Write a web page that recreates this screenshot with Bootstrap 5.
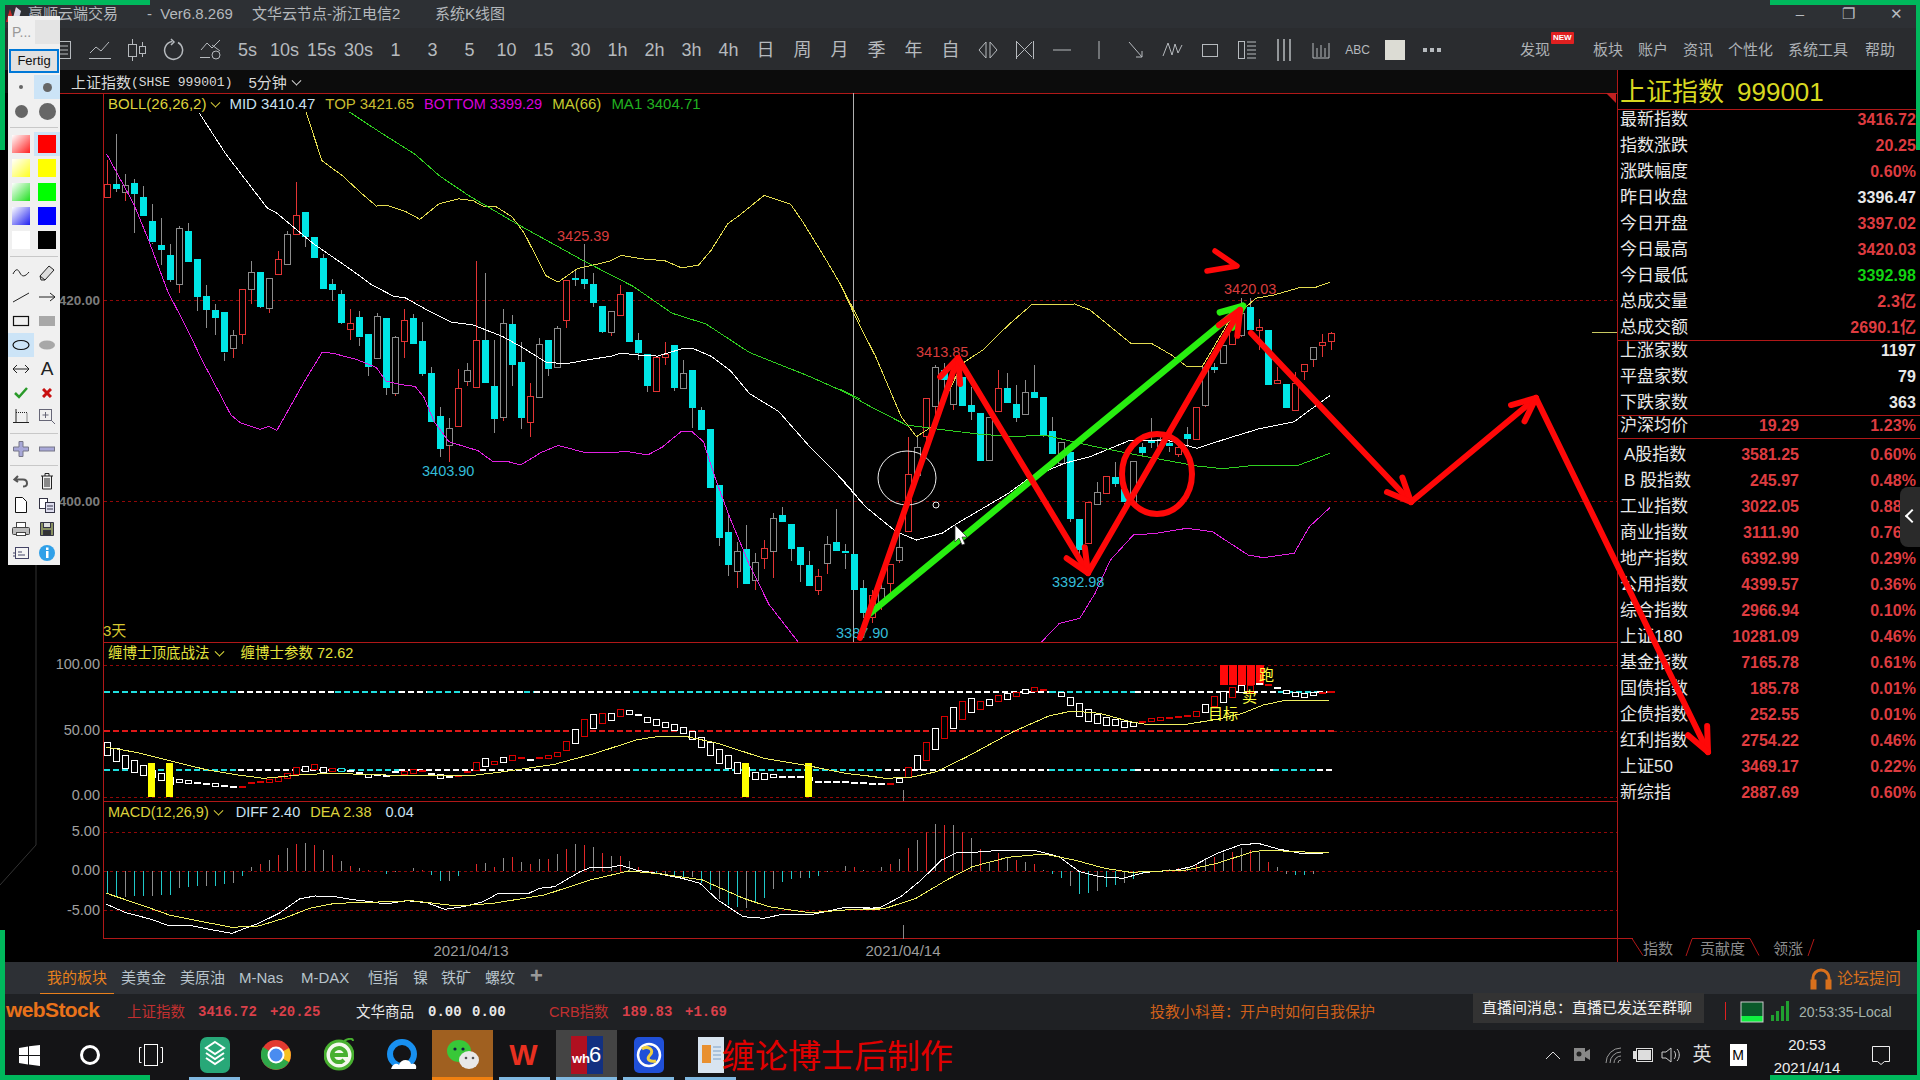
<!doctype html>
<html lang="zh">
<head>
<meta charset="utf-8">
<title>系统K线图</title>
<link href="https://cdn.jsdelivr.net/npm/bootstrap@5.3.0/dist/css/bootstrap.min.css" rel="stylesheet">
<style>
html,body{margin:0;background:#000;overflow:hidden}
body,svg text{font-family:"Liberation Sans","Noto Sans CJK SC",sans-serif}
.appbox{width:1920px;height:1080px;color:#ddd;overflow:hidden}
.ttlbar{height:28px;background:#2d3034;color:#b4b8bc;font-size:15px;padding-left:28px;flex:none;position:relative}
.ttlbar span{white-space:nowrap}
.ttlicon{position:absolute;left:5px;top:6px}
.ttl-a{width:119px}.ttl-b{width:105px}.ttl-c{width:183px}
.winbtn{width:48px;text-align:center;color:#b8bcc0;font-size:15px}
.tlbar{height:42px;background:#2a2c2f;padding-left:44px;padding-top:2px;flex:none}
.tlcell{width:37px;height:40px;color:#b6babe;font-size:18px;display:flex;align-items:center;justify-content:center;white-space:nowrap}
.tlcell svg{display:block}
.tlcell.sm{font-size:12px}
.tlmenu{font-size:15px;color:#aeb2b6;position:relative;white-space:nowrap}
.newtag{position:absolute;left:31px;top:-7px;background:#e02020;color:#fff;font-size:8px;font-weight:700;line-height:12px;padding:0 2px;border-radius:1px}
.mainrow{height:892px;flex:none;background:#000}
.chartcol{width:1617px;flex:none}
.subhdr{height:23px;background:#0c0c0c;padding:3px 0 0 71px;font-size:15px;color:#d8d8d8;white-space:nowrap;flex:none}
.subhdr .mono{font-family:"Liberation Mono","Noto Sans CJK SC",monospace;font-size:13px}
.panea{height:549px}.paneb{height:159px}.panec{height:138px}
.canvas{left:0;top:0;overflow:visible}
.legendrow{padding-left:108px;font-size:15px;line-height:22px;white-space:nowrap;gap:10px}
.legendrow.lc{font-size:14.5px;gap:10px}
.bott{font-size:14.5px}
.chev{display:inline-block;width:7px;height:7px;border-right:1px solid currentColor;border-bottom:1px solid currentColor;transform:rotate(45deg) translate(-2px,-2px);margin-left:6px}
.c-ye{color:#dcd23c}.c-bl{color:#c8e0f0}.c-to{color:#c8bc30}.c-mg{color:#d800d8}.c-ma{color:#c4cc30}.c-gr{color:#20b020}.c-yy{color:#e4e43c}
.dateaxis{height:23px;color:#9c9c9c;font-size:15px}
.dateaxis span{position:absolute;top:1px;transform:translateX(-50%)}
.dt-a{left:471px}.dt-b{left:903px}
.sidepan{width:303px;flex:none;border-left:1px solid #b01818;padding-right:4px;position:relative}
.sidettl{height:40px;border-bottom:1px solid #b01818;margin-right:-4px;padding-left:2px;color:#d8d820;font-size:26px;line-height:44px;white-space:nowrap}
.sidettl span{margin-left:13px}
.sect{border-bottom:1px solid #b01818;margin-right:-4px;padding-right:4px}
.sect.nob{border:0;padding-top:3px}
.sect.up{margin-top:-4px}
.pvrow{height:26px;display:flex;align-items:center;font-size:17px;line-height:24px;color:#e8e8e8;padding:2px 0 0 2px;white-space:nowrap}
.sect.nob .pvrow{padding-top:0}
.pv-l{width:72px}
.pv-l.ind{padding-left:4px}
.pv-m{width:107px;text-align:right;font-size:16px;font-weight:700;color:#de3c40}
.pv-r{flex:1;text-align:right;font-size:16px;font-weight:700;color:#de3c40;letter-spacing:.1px}
.pv-r.wt{color:#e8e8e8}.pv-r.gn{color:#12d412}
.tabsvg{left:0;bottom:0}
.tabrow{height:32px;background:#2d3035;color:#b8c4cc;font-size:15px;flex:none}
.tabrow .nav-link{color:#b8c4cc;padding:0;position:absolute;top:5px;line-height:22px;white-space:nowrap}
.tabrow .nav-link.active{color:#e8801c}
.tabline{position:absolute;left:40px;width:74px;bottom:0;height:1px;background:#e8801c}
.forum{position:absolute;left:1810px;top:5px;color:#d8701c;font-size:16px;white-space:nowrap;display:flex;align-items:center;gap:5px}
.stockbar{height:36px;background:#1f2124;flex:none;font-size:14.5px;white-space:nowrap}
.stockbar>*{position:absolute;top:8px;line-height:20px}
.logoa{color:#e8721a;font-weight:700;font-size:21px;left:6px;letter-spacing:-.6px;top:6px!important}
.st-r{color:#c23030}.st-rb{color:#d8404a;font-family:"Liberation Mono",monospace;font-size:14px;font-weight:700}
.st-w{color:#e8e8e8}.st-wb{color:#e8e8e8;font-family:"Liberation Mono",monospace;font-size:14px;font-weight:700}
.st-or{color:#d0601a;font-size:15px}
.toast-live{left:1473px;top:-1px!important;width:231px;height:30px;background:#333;color:#f0f0f0;font-size:15px;line-height:30px!important;padding-left:9px;z-index:2}
.clockt{color:#a4b4ac;font-size:14px;left:1799px}
.taskbar{height:50px;background:#141416;flex:none}
.tkic{position:absolute;top:0;width:61px;height:50px;display:flex;align-items:center;justify-content:center}
.tkic.act-a{background:#a06020}.tkic.act-b{background:#444}
.tkmark{position:absolute;top:47px;height:3px;background:#80b8e0}
.tkmark.or{background:#f08010}
.redcap{position:absolute;left:722px;top:5px;font-size:33px;line-height:44px;color:#e00000;white-space:nowrap;font-family:"Liberation Serif","Noto Sans CJK SC",serif}
.tray{position:absolute;top:0;height:50px;display:flex;align-items:center;justify-content:center;color:#ddd}
.tclock{position:absolute;left:1765px;width:84px;text-align:center;color:#eee;font-size:15px;line-height:23px;top:3px}
.mbox{width:17px;height:22px;border:1px solid #fff;font-size:14px;line-height:20px;text-align:center;background:#fff;color:#000}
.overlay{left:0;top:0;pointer-events:none}
.toolpan{left:8px;top:16px;width:52px;background:#f0f0f0;color:#222}
.tp-hd{height:33px;font-size:14px;color:#999;line-height:32px;padding-left:4px;position:relative}
.tp-hd i{position:absolute;left:27px;top:4px;width:25px;height:24px;background:#e4e4e4}
.tp-btn{height:24px;margin:0 1px;border:2px solid #0078d7;background:#e1e1e1;font-size:13px;line-height:20px;text-align:center;color:#111}
.tp-grid{display:grid;grid-template-columns:26px 26px;grid-auto-rows:24px;padding-top:2px}
.tp-grid.c{padding-top:0}
.tp-cell{display:flex;align-items:center;justify-content:center}
.tp-cell.sel{background:#cce4f7}
.tp-sep{height:9px;display:flex;align-items:center}
.tp-sep.nr{height:8px}
.tp-sep::after{content:"";height:1px;background:#c8c8c8;flex:1;margin:0 2px}
.dotg{border-radius:50%;background:#666;display:block}
.dot3{width:4px;height:4px}.dot8{width:9px;height:9px}.dot13{width:13px;height:13px}.dot16{width:17px;height:17px}
.swa{display:block;width:18px;height:18px}
.sw1{background:linear-gradient(135deg,#fff,#ff2020)}.sw2{background:#f00}
.sw3{background:linear-gradient(135deg,#fff,#ffff20)}.sw4{background:#ff0}
.sw5{background:linear-gradient(135deg,#fff,#20e020)}.sw6{background:#0f0}
.sw7{background:linear-gradient(135deg,#fff,#2020f0)}.sw8{background:#00f}
.sw9{background:#fff}.sw10{background:#000}
.tp-a{font-size:19px;line-height:24px}
.sideflap{right:0;top:487px;width:20px;height:60px;background:#2a2a2a;border-radius:8px 0 0 8px}
.sideflap::after{content:"";position:absolute;left:7px;top:24px;width:10px;height:10px;border-left:2px solid #fff;border-bottom:2px solid #fff;transform:rotate(45deg)}
.brk{position:absolute;background:#00b85c}
.b1{left:0;top:0;width:150px;height:5px}.b2{left:0;top:0;width:5px;height:150px}
.b3{right:0;top:0;width:150px;height:5px}.b4{right:0;top:0;width:4px;height:150px}
.b5{left:0;bottom:0;width:150px;height:5px}.b6{left:0;bottom:0;width:5px;height:150px}
.b7{right:0;bottom:0;width:150px;height:5px}.b8{right:0;bottom:0;width:3px;height:150px}
</style>
</head>
<body>
<div class="appbox d-flex flex-column position-relative">

  <div class="ttlbar d-flex align-items-center">
    <svg class="ttlicon" width="18" height="16"><path d="M1 16L5 3l3 9 3-11 2 15z" fill="#c82828"/><path d="M8 12l3-11 5 4-3 11z" fill="#d8d8e8"/></svg>
    <span class="ttl-a">赢顺云端交易</span><span class="ttl-b">-&nbsp;&nbsp;Ver6.8.269</span><span class="ttl-c">文华云节点-浙江电信2</span><span>系统K线图</span>
    <div class="ms-auto d-flex align-items-center">
      <span class="winbtn">–</span><span class="winbtn">❐</span><span class="winbtn">✕</span>
    </div>
  </div>

  <div class="tlbar d-flex align-items-center">
    <div class="tlcell"><svg width="20" height="22" fill="none" stroke="#b6babe"><rect x="2.5" y="2.5" width="15" height="17"/><path d="M6 7h9M6 11h9M6 15h9"/></svg></div>
    <div class="tlcell"><svg width="24" height="22" fill="none" stroke="#b6babe"><path d="M2 14l6-6 5 4 8-9M1 19.500h22"/></svg></div>
    <div class="tlcell"><svg width="24" height="24" fill="none" stroke="#b6babe"><path d="M7.500 1v22M17.500 4v15"/><rect x="3.500" y="6.500" width="8" height="12" fill="#2a2c2f"/><rect x="14.500" y="8.500" width="6" height="7" fill="#2a2c2f"/></svg></div>
    <div class="tlcell"><svg width="22" height="24" fill="none" stroke="#b6babe" stroke-width="1.500"><path d="M9 3.500A9 9 0 1 0 15 4.500M8 1l3 3-3 3"/></svg></div>
    <div class="tlcell"><svg width="24" height="24" fill="none" stroke="#b6babe"><path d="M2 12l6-7 5 5 8-8M1 19.500h10"/><circle cx="17" cy="17" r="4"/><path d="M13 7l8 6"/></svg></div>
    <div class="tlcell">5s</div><div class="tlcell">10s</div><div class="tlcell">15s</div><div class="tlcell">30s</div>
    <div class="tlcell">1</div><div class="tlcell">3</div><div class="tlcell">5</div><div class="tlcell">10</div><div class="tlcell">15</div><div class="tlcell">30</div>
    <div class="tlcell">1h</div><div class="tlcell">2h</div><div class="tlcell">3h</div><div class="tlcell">4h</div>
    <div class="tlcell">日</div><div class="tlcell">周</div><div class="tlcell">月</div><div class="tlcell">季</div><div class="tlcell">年</div><div class="tlcell">自</div>
    <div class="tlcell"><svg width="22" height="20" fill="none" stroke="#b6babe"><path d="M9 2L2 10l7 8zM13 2l7 8-7 8z"/></svg></div>
    <div class="tlcell"><svg width="22" height="22" fill="none" stroke="#b6babe"><path d="M2.500 2v18M19.500 2v18M3 3l15 15M18 3L3 18"/></svg></div>
    <div class="tlcell"><svg width="20" height="6" stroke="#b6babe"><path d="M1 3h18"/></svg></div>
    <div class="tlcell"><svg width="6" height="20" stroke="#b6babe"><path d="M3 1v18"/></svg></div>
    <div class="tlcell"><svg width="20" height="20" fill="none" stroke="#b6babe"><path d="M3 2l13 15M16 11v6h-6"/></svg></div>
    <div class="tlcell"><svg width="22" height="22" fill="none" stroke="#b6babe"><path d="M1 17L6 4l4 12 3-11 3 9 4-8"/></svg></div>
    <div class="tlcell"><svg width="20" height="20" fill="none" stroke="#b6babe"><rect x="2.500" y="4.500" width="15" height="12"/></svg></div>
    <div class="tlcell"><svg width="20" height="22" fill="none" stroke="#b6babe"><rect x="1.500" y="2.500" width="6" height="17"/><path d="M10 3h9M10 7h9M10 11h9M10 15h9M10 19h9"/></svg></div>
    <div class="tlcell"><svg width="18" height="24" stroke="#b6babe" stroke-width="1.500"><path d="M3 1v22M9 1v22M15 1v22"/></svg></div>
    <div class="tlcell"><svg width="20" height="20" fill="none" stroke="#b6babe"><path d="M2 3v15h16V3M6 8v9M10 5v12M14 8v9"/></svg></div>
    <div class="tlcell sm">ABC</div>
    <div class="tlcell"><svg width="20" height="20"><rect width="20" height="20" fill="#dcdcd4"/></svg></div>
    <div class="tlcell"><svg width="20" height="6" fill="#b6babe"><rect x="1" y="1" width="4" height="4"/><rect x="8" y="1" width="4" height="4"/><rect x="15" y="1" width="4" height="4"/></svg></div>
    <div class="tlmenu ms-auto d-flex" id="menuRight">
      <span class="position-relative">发现<span class="newtag">NEW</span></span>
    </div>
  </div>

  <div class="mainrow d-flex">
    <div class="chartcol d-flex flex-column">
      <div class="subhdr d-flex align-items-center">上证指数<span class="mono">(SHSE 999001)</span><span class="ms-3">5分钟</span><span class="chev"></span></div>
      <div class="panea position-relative">
        <svg id="svgA" class="position-absolute canvas" width="1617" height="549" viewBox="0 93 1617 549"></svg>
        <div class="legendrow d-flex position-relative">
          <span class="c-ye">BOLL(26,26,2)<span class="chev"></span></span>
          <span class="c-bl">MID 3410.47</span><span class="c-to">TOP 3421.65</span><span class="c-mg bott">BOTTOM 3399.29</span><span class="c-ma">MA(66)</span><span class="c-gr">MA1 3404.71</span>
        </div>
      </div>
      <div class="paneb position-relative">
        <svg id="svgB" class="position-absolute canvas" width="1617" height="159" viewBox="0 642 1617 159"></svg>
        <div class="legendrow lc d-flex position-relative c-yy">
          <span>缠博士顶底战法<span class="chev"></span></span><span class="ms-2">缠博士参数 72.62</span>
        </div>
      </div>
      <div class="panec position-relative">
        <svg id="svgC" class="position-absolute canvas" width="1617" height="138" viewBox="0 801 1617 138"></svg>
        <div class="legendrow lc d-flex position-relative">
          <span class="c-ye">MACD(12,26,9)<span class="chev"></span></span><span class="c-bl ms-1">DIFF 2.40</span><span class="c-ye">DEA 2.38</span><span class="c-bl ms-1">0.04</span>
        </div>
      </div>
      <div class="dateaxis position-relative"><span class="dt-a">2021/04/13</span><span class="dt-b">2021/04/14</span></div>
    </div>
    <div class="sidepan d-flex flex-column">
      <div class="sidettl">上证指数<span>999001</span></div>
      <div class="sect up" id="s1"></div>
      <div class="sect up" id="s2"></div>
      <div class="sect up" id="s3"></div>
      <div class="sect nob" id="s4"></div>
      <svg class="position-absolute tabsvg" width="302" height="24" fill="none" stroke="#b01818"><path d="M0 .500H14l11 17M68 18l6-17M74 .500h58M132 .500l9 17M190 18l6-17"/>
        <text x="25" y="16" font-size="15" fill="#8c8c8c" stroke="none">指数</text><text x="82" y="16" font-size="15" fill="#8c8c8c" stroke="none">贡献度</text><text x="155" y="16" font-size="15" fill="#8c8c8c" stroke="none">领涨</text></svg>
    </div>
  </div>

  <div class="tabrow position-relative">
    <ul class="nav">
      <li><a class="nav-link active tx-47">我的板块</a></li>
    </ul>
    <span class="tabline"></span>
    <div id="tabsHost"></div>
    <div class="forum"><svg width="22" height="22" fill="none" stroke="#d8701c" stroke-width="3"><path d="M3 15V10a8 8 0 0 1 16 0v5"/><rect x="2" y="13" width="3" height="7" fill="#d8701c"/><rect x="17" y="13" width="3" height="7" fill="#d8701c"/></svg>论坛提问</div>
  </div>

  <div class="stockbar position-relative" id="stockBar">
    <span class="logoa">webStock</span>
    <span class="toast-live">直播间消息：直播已发送至群聊</span>
  </div>

  <div class="taskbar position-relative" id="taskBar">
    <span class="redcap">缠论博士后制作</span>
    <span class="tclock">20:53<br>2021/4/14</span>
  </div>

  <svg class="position-absolute overlay" id="anno" width="1920" height="1080"></svg>

  <div class="position-absolute sideflap"></div>

  <div class="position-absolute toolpan" id="toolPan">
    <div class="tp-hd">P...<i></i></div>
    <div class="tp-btn">Fertig</div>
    <div class="tp-grid">
      <div class="tp-cell"><span class="dotg dot3"></span></div><div class="tp-cell sel"><span class="dotg dot8"></span></div>
      <div class="tp-cell"><span class="dotg dot13"></span></div><div class="tp-cell"><span class="dotg dot16"></span></div>
    </div>
    <div class="tp-sep"></div>
    <div class="tp-grid c">
      <div class="tp-cell"><span class="swa sw1"></span></div><div class="tp-cell sel"><span class="swa sw2"></span></div>
      <div class="tp-cell"><span class="swa sw3"></span></div><div class="tp-cell"><span class="swa sw4"></span></div>
      <div class="tp-cell"><span class="swa sw5"></span></div><div class="tp-cell"><span class="swa sw6"></span></div>
      <div class="tp-cell"><span class="swa sw7"></span></div><div class="tp-cell"><span class="swa sw8"></span></div>
      <div class="tp-cell"><span class="swa sw9"></span></div><div class="tp-cell"><span class="swa sw10"></span></div>
    </div>
    <div class="tp-sep"></div>
    <div class="tp-grid c">
      <div class="tp-cell"><svg width="18" height="12" fill="none" stroke="#222"><path d="M1 7c3-6 5-5 7-1s5 4 9-1"/></svg></div>
      <div class="tp-cell"><svg width="18" height="18" fill="none" stroke="#222"><path d="M2 12L11 2l5 4-9 10H3z" fill="#ddd"/><path d="M2 12l5 4"/></svg></div>
      <div class="tp-cell"><svg width="18" height="12" stroke="#222"><path d="M1 11L17 2"/></svg></div>
      <div class="tp-cell"><svg width="18" height="12" fill="none" stroke="#222"><path d="M1 6h16M12 2l5 4-5 4"/></svg></div>
      <div class="tp-cell"><svg width="18" height="12" fill="none" stroke="#111" stroke-width="1.200"><rect x="1.500" y="1.500" width="15" height="9"/></svg></div>
      <div class="tp-cell"><svg width="18" height="12"><rect x="1" y="1" width="16" height="10" fill="#a8a8a8"/></svg></div>
      <div class="tp-cell sel"><svg width="18" height="12" fill="none" stroke="#111" stroke-width="1.200"><ellipse cx="9" cy="6" rx="8" ry="4.500"/></svg></div>
      <div class="tp-cell"><svg width="18" height="12"><ellipse cx="9" cy="6" rx="8" ry="4.500" fill="#a8a8a8"/></svg></div>
      <div class="tp-cell"><svg width="18" height="12" fill="none" stroke="#222"><path d="M1 6h16M5 2L1 6l4 4M13 2l4 4-4 4"/></svg></div>
      <div class="tp-cell tp-a">A</div>
      <div class="tp-cell"><svg width="14" height="12" fill="none" stroke="#2a9a2a" stroke-width="2.500"><path d="M1 6l4 4 8-9"/></svg></div>
      <div class="tp-cell"><svg width="10" height="10" stroke="#c81010" stroke-width="3"><path d="M1 1l8 8M9 1L1 9"/></svg></div>
      <div class="tp-cell"><svg width="18" height="18" fill="none" stroke="#222"><path d="M4 1v14M1 14.500h16" /><path d="M4 4.500h11v10" stroke-dasharray="1 1"/></svg></div>
      <div class="tp-cell"><svg width="18" height="18" fill="none" stroke="#667"><rect x="1.500" y="1.500" width="12" height="11"/><path d="M7.500 4v6M4.500 7h6M13 12l4 4"/></svg></div>
    </div>
    <div class="tp-sep nr"></div>
    <div class="tp-grid c">
      <div class="tp-cell"><svg width="16" height="16" fill="#a8a8d8" stroke="#778"><path d="M6 .500h4v5.500h5.500v4H10v5.500H6V10H.500V6H6z"/></svg></div>
      <div class="tp-cell"><svg width="16" height="6" fill="#a8a8d8" stroke="#778"><rect x=".500" y="1" width="15" height="4"/></svg></div>
    </div>
    <div class="tp-sep nr"></div>
    <div class="tp-grid c">
      <div class="tp-cell"><svg width="16" height="14" fill="none" stroke="#555" stroke-width="2"><path d="M5 2L1.500 5.500 5 8M2 5.500h8c3 0 4 2 4 4s-2 3-4 3"/></svg></div>
      <div class="tp-cell"><svg width="14" height="18" fill="none" stroke="#222"><path d="M1 4h12M5 4V1.500h4V4M2.500 4v13h9V4M5 6v9M7 6v9M9 6v9"/></svg></div>
      <div class="tp-cell"><svg width="14" height="18" fill="#fff" stroke="#111"><path d="M1.500 1.500h7l4 4v11h-11z"/></svg></div>
      <div class="tp-cell"><svg width="18" height="16" fill="#fff" stroke="#334"><rect x="1.500" y="1.500" width="8" height="10"/><rect x="7.500" y="5.500" width="9" height="10" fill="#dde"/><path d="M9 9h6M9 12h6"/></svg></div>
      <div class="tp-cell"><svg width="20" height="16" fill="#bbb" stroke="#444"><rect x="1.500" y="6.500" width="17" height="7" rx="1"/><rect x="5.500" y="1.500" width="9" height="5" fill="#fff"/><rect x="5.500" y="11.500" width="9" height="3" fill="#fff"/></svg></div>
      <div class="tp-cell"><svg width="16" height="16" fill="#889060" stroke="#334"><path d="M1.500 1.500h13v13h-13z"/><rect x="4.500" y="1.500" width="7" height="5" fill="#ddd"/><rect x="4.500" y="9.500" width="7" height="5" fill="#333"/></svg></div>
      <div class="tp-cell"><svg width="18" height="14" fill="#f4f4f4" stroke="#446"><rect x="3.500" y="1.500" width="13" height="11"/><path d="M6 6h4M6 9h7M1 7h2M1 10h2"/></svg></div>
      <div class="tp-cell"><svg width="18" height="18"><circle cx="9" cy="9" r="8" fill="#30a0e8"/><rect x="8" y="7" width="2.500" height="7" fill="#fff"/><rect x="8" y="3.500" width="2.500" height="2.500" fill="#fff"/></svg></div>
    </div>
  </div>

  <i class="brk b1"></i><i class="brk b2"></i><i class="brk b3"></i><i class="brk b4"></i>
  <i class="brk b5"></i><i class="brk b6"></i><i class="brk b7"></i><i class="brk b8"></i>
</div>

<script>
const NS='http://www.w3.org/2000/svg';
function el(p,t,a,txt){const e=document.createElementNS(NS,t);for(const k in a)e.setAttribute(k,a[k]);if(txt!==undefined)e.textContent=txt;p.appendChild(e);return e;}
const cx=i=>Math.round(106.8+9*i);
const z10=(p)=>[100+p[0]/2.063,90+p[1]/2.8], z11=(p)=>[840+p[0]/1.96,230+p[1]/3], z7=(p)=>[80+p[0]/1.96,630+p[1]/3], z8=(p)=>[860+p[0]/1.96,630+p[1]/3];
const Y10=y=>90+y/2.8,Y11=y=>230+y/3,Yz=y=>630+y/3;
function crisp(y){return Math.round(y)+.5;}

const A=document.getElementById('svgA'),B=document.getElementById('svgB'),C=document.getElementById('svgC');
const GRID='#900808',RED='#b01818';
function hl(s,x1,x2,y,col,dash,w){const a={x1,x2,y1:y,y2:y,stroke:col,'stroke-width':w||1,'shape-rendering':'crispEdges'};if(dash)a['stroke-dasharray']=dash;el(s,'line',a);}
function vl(s,x,y1,y2,col,w){el(s,'line',{x1:x,x2:x,y1,y2,stroke:col,'stroke-width':w||1,'shape-rendering':'crispEdges'});}
function lab(s,x,y,t,col,size,anchor,bold){const a={x,y,fill:col,'font-size':size||15,'text-anchor':anchor||'start'};if(bold)a['font-weight']=700;el(s,'text',a,t);}
function poly(s,pts,col){el(s,'polyline',{points:pts.map(p=>p[0].toFixed(1)+','+p[1].toFixed(1)).join(' '),fill:'none',stroke:col,'shape-rendering':'crispEdges'});}

/* main pane */
hl(A,60,1617,93.5,RED);vl(A,103.5,93,642,RED);
hl(A,104,1617,300.5,GRID,'3 3');hl(A,104,1617,501.5,GRID,'3 3');
lab(A,100,305,'3420.00','#7c7c7c',13.5,'end',1);lab(A,100,506,'3400.00','#7c7c7c',13.5,'end',1);
vl(A,853.5,93,642,'#b0b0b0');
hl(A,1592,1617,332.5,'#c8c860');
el(A,'polygon',{points:'1606,93 1616,93 1616,103',fill:'#c02020'});
const CY='#00e6e6',RD='#e23434',GY='#8c8c8c';
const mainC=[
['r',196,262,298,298],['c',122,264,277,285],['w',235,267,287,310],['c',248,260,290,400],['c',270,300,352,352],['c',320,367,427,430],['c',358,434,447,490],['c',432,462,532,538],['w',380,387,544,568],['c',372,395,483,483],
['c',473,473,579,620],['c',545,577,615,665],['c',600,616,637,685],['c',622,622,735,758],['w',672,687,723,750],['r',558,558,685,710],['w',480,510,558,600],['c',510,510,608,610],['w',525,525,608,625],['r',450,473,515,515],
['w',395,403,486,486],['r',258,350,403,403],['c',342,342,412,440],['c',412,412,472,472],['c',460,470,556,556],['c',530,543,559,592],['c',560,572,652,655],['r',612,651,667,700],['c',618,636,693,718],['c',683,683,775,800],
['w',625,634,752,752],['c',638,638,833,853],['w',690,692,850,857],['r',612,645,705,750],['c',628,638,710,710],['c',650,703,795,800],['c',775,792,930,930],['c',888,913,1004,1027],['w',918,947,995,1042],['r',780,833,940,940],
['w',765,785,815,830],['r',480,701,833,833],['c',512,700,820,820],['c',700,829,920,960],['w',612,652,915,928],['c',630,655,770,830],['c',705,762,918,950],['r',820,858,930,972],['w',695,712,860,860],['c',700,700,780,800],
['w',660,667,777,777],['r',533,533,645,665],['c',505,526,532,550],['c',432,530,543,558],['c',512,543,596,607],['c',605,605,678,680],['w',620,620,680,688],['r',545,572,632,632],['c',566,566,705,705],['c',680,700,736,755],
['c',740,740,830,845],['r',745,747,842,842],['r',705,740,748,770],['c',714,714,834,842],['w',755,792,834,834],['c',783,783,888,945],['c',888,897,952,952],['c',949,949,1113,1113],['c',1106,1106,1253,1278],['c',1190,1238,1330,1362],
['w',1265,1292,1348,1395],['c',1218,1285,1382,1382],['w',1295,1322,1373,1400],['r',1260,1283,1312,1340],['w',1185,1197,1288,1365],['c',1168,1190,1210,1210],['c',1215,1215,1285,1320],['c',1280,1280,1330,1378],['c',1292,1330,1390,1390],['r',1340,1362,1402,1415],
['w',1250,1272,1325,1355],['c',1172,1266,1290,1290],['c',1270,1292,1298,1340],['c',1300,1300,1400,1400]];
const main2=[
['c',1050,1075,1150,1165],['r',1080,1095,1160,1180],['w',1060,1075,1120,1140],['r',1003,1003,1060,1090],['w',905,950,990,1000],['r',620,733,905,905],['w',615,652,735,735],['r',505,505,620,650],['w',405,412,530,560],['c',400,420,450,480],
['w',430,440,520,540],['c',440,440,527,527],['c',470,525,545,570],['c',548,548,692,692],['w',562,562,692,692],['r',420,475,545,545],['c',430,475,520,520],['c',465,522,563,575],['w',450,485,552,552],['c',405,487,505,505],
['c',502,502,615,620],['c',560,603,672,672],['w',637,637,700,702],['c',665,665,865,875],['c',868,868,960,1020],['r',817,817,940,940],['w',755,785,820,820],['r',737,737,788,790],['c',695,742,762,770],['c',700,778,818,830],
['w',692,692,820,830],['c',640,650,668,680],['c',565,633,640,655],['w',620,628,650,660],['c',630,640,650,665],['r',640,650,670,680],['c',590,613,628,650],['r',532,532,628,628],['w',410,410,525,530],['c',400,410,418,430],
['w',345,345,400,402],['r',280,290,340,340],['w',205,250,315,320],['c',205,232,302,302],['r',268,290,298,360],['c',300,300,466,466],['r',410,450,458,460],['c',462,462,533,533],['r',425,460,540,540],['r',403,403,425,450],
['w',350,350,385,410],['r',312,335,343,380],['r',305,308,333,360]];
function candle(i,c,Yf){
  const x=cx(i),col=c[0]==='c'?GY:(c[0]==='r'?RD:GY);
  const lowc=c[0]==='w'?RD:col;
  const t=Yf(c[1]),b1=Yf(c[2]),b2=Yf(c[3]),b=Yf(c[4]);
  vl(A,x+.5,t,b1,col);vl(A,x+.5,b2,b,lowc);
  if(c[0]==='c')el(A,'rect',{x:x-3,y:Math.round(b1),width:7,height:Math.max(2,Math.round(b2-b1)),fill:CY,'shape-rendering':'crispEdges'});
  else el(A,'rect',{x:x-2.5,y:crisp(b1),width:6,height:Math.max(2,Math.round(b2-b1)),fill:'#000',stroke:c[0]==='r'?RD:GY,'shape-rendering':'crispEdges'});
}
mainC.forEach((c,i)=>candle(i,c,Y10));
main2.forEach((c,i)=>candle(i+84,c,Y11));

const wh1=[[205,65],[260,180],[345,330],[365,345],[440,430],[520,505],[560,545],[605,577],[630,582],[680,620],[725,650],[770,658],[830,690],[870,720],[920,762],[960,767],[1000,757],[1055,745],[1075,737],[1110,742],[1150,745],[1200,725],[1225,725],[1260,745],[1300,785],[1340,850],[1400,900],[1465,1000],[1520,1075],[1568,1150]];
const wh2=[[0,740],[50,830],[110,905],[150,930],[200,910],[230,880],[330,790],[370,745],[440,700],[490,680],[570,630],[640,630],[700,655],[760,625],[820,597],[890,575],[930,530],[960,497]];
const yl1=[[425,62],[458,198],[500,240],[540,290],[570,325],[590,322],[630,340],[660,362],[700,318],[740,305],[770,310],[790,325],[815,325],[850,355],[875,400],[920,520],[945,538],[985,500],[1050,480],[1075,463],[1120,473],[1165,478],[1200,498],[1235,490],[1260,450],[1295,375],[1320,350],[1370,295],[1425,320],[1450,370],[1500,480],[1530,550],[1568,650]];
const yl2=[[0,160],[30,260],[70,380],[120,560],[150,620],[180,590],[240,400],[280,360],[330,285],[375,225],[460,222],[490,240],[570,340],[610,340],[650,375],[680,410],[710,410],[760,280],[815,205],[850,195],[900,173],[930,173],[960,157]];
const gr1=[[515,62],[580,120],[650,180],[700,240],[760,295],[860,375],[1000,480],[1100,550],[1180,625],[1250,655],[1340,735],[1460,800],[1568,865]];
const gr2=[[0,478],[60,530],[130,585],[190,597],[270,612],[340,620],[400,615],[500,650],[600,680],[700,708],[750,716],[800,708],[900,705],[960,670]];
const mg1=[[14,180],[70,320],[100,420],[140,565],[180,670],[210,755],[270,910],[290,932],[330,950],[348,942],[365,953],[420,820],[458,735],[480,737],[530,755],[570,777],[590,815],[620,825],[650,830],[668,860],[690,930],[720,985],[780,1010],[810,1040],[840,1040],[868,1050],[910,1015],[945,995],[1000,1015],[1060,1015],[1085,1012],[1130,1022],[1160,1000],[1200,955],[1220,955],[1245,985],[1270,1090],[1300,1200],[1340,1330],[1380,1440],[1440,1545]];
const mg2=[[395,1236],[430,1180],[470,1165],[500,1090],[530,990],[575,915],[620,910],[680,895],[730,905],[800,975],[830,983],[890,970],[920,890],[960,833]];
function ml(a,b,c){poly(A,a.map(z10).concat(b.map(z11)),c);}
ml(wh1,wh2,'#ffffff');ml(yl1,yl2,'#e4dc50');ml(gr1,gr2,'#30d020');
poly(A,mg1.map(z10),'#e020e0');poly(A,mg2.map(z11),'#e020e0');
[[557,241,'3425.39','#d83c3c'],[422,476,'3403.90','#34bcd8'],[916,357,'3413.85','#d83c3c'],[1224,294,'3420.03','#d83c3c'],[1052,587,'3392.98','#34bcd8'],[836,638,'3387.90','#34bcd8']].forEach(a=>lab(A,a[0],a[1],a[2],a[3],14.5));
lab(A,103,636,'3天','#d8c830',15);

/* indicator pane */
hl(B,103,1617,642.5,RED);vl(B,103.5,642,801,RED);
hl(B,104,1617,665.5,GRID,'3 3');hl(B,104,1617,797.5,GRID,'3 3');hl(B,1334,1617,731.5,GRID,'3 3');
[['100.00',670],['50.00',736],['0.00',801]].forEach(a=>lab(B,100,a[1]-1,a[0],'#a0a0a0',14.5,'end'));
function segs(y,list){list.forEach(s=>hl(B,s[0],s[1],y,s[2],'6 3',2));}
const CYD='#20e0e0',WHD='#ffffff',RDD='#e02020';
segs(692,[[104,238,CYD],[238,335,WHD],[335,399,CYD],[399,427,WHD],[427,463,CYD],[463,524,WHD],[524,534,CYD],[534,633,WHD],[633,885,CYD],[885,1049,WHD],[1049,1135,CYD],[1135,1278,WHD],[1278,1317,CYD],[1317,1327,WHD],[1327,1334,RDD]]);
segs(731,[[104,1334,'#e01818']]);
segs(770,[[104,238,CYD],[238,340,WHD],[340,399,CYD],[399,633,WHD],[633,885,CYD],[885,1049,WHD],[1049,1135,CYD],[1135,1273,WHD],[1273,1317,CYD],[1317,1334,WHD]]);
const indc=[['w',337,377],['w',355,395],['w',375,415],['w',390,425],['w',405,435],['w',420,440],['w',430,452],['w',440,460],['w',447,457],['w',449,458],['w',455,461],['w',458,466],['w',460,469],['w',465,472],['w',468,476],['r',467,470],['r',457,464],['r',454,461],['r',448,458],['r',440,452],['r',430,445],['r',412,434],['w',407,422],['r',403,418],['w',410,424],['r',415,425],['c',415,425],['w',421,427],['w',425,432],['w',432,442],['w',433,440],['w',435,442],['w',424,426],['r',423,433],['r',417,428],['r',420,424],['w',428,434],['w',431,442],['w',437,445],['r',436,438],['r',422,430],['r',397,421],['w',385,408],['r',394,404],['w',380,395],['r',374,388],['r',382,385],['w',388,392],['r',382,386],['r',375,385],['r',365,377],['r',334,362],['w',298,340],['r',267,317],['w',253,296],['r',250,280],['w',248,268],['r',238,260],['w',241,254],['w',252,255],['w',260,274],['w',268,286],['w',275,290],['w',283,302],['w',292,310],['w',304,328],['w',320,350],['w',335,375],['w',358,400],['w',376,415],['w',395,428],['w',410,437],['w',425,445],['w',430,449],['w',433,442],['w',437,439],['w',437,439],['w',439,445],['w',440,450],['w',452,459],['w',452,457],['w',452,454],['w',452,454],['w',455,460],['w',457,462],['w',460,462],
['w',460,462],['r',458,462],['w',443,455],['r',410,440],['w',376,418],['r',337,392],['w',295,358],['r',258,325],['w',230,292],['r',213,268],['w',205,247],['r',212,236],['w',207,226],['r',196,214],['w',188,205],['r',185,198],['w',178,190],['r',172,185],['r',178,184],['c',183,190],['w',187,198],['w',202,226],['w',220,258],['w',238,274],['w',253,281],['w',260,284],['w',266,284],['w',272,290],['w',275,288],['r',274,280],['r',265,274],['r',262,271],['r',261,267],['r',258,265],['r',255,262],['r',244,258],['w',221,246],['r',199,228],['w',182,214],['r',170,200],['w',166,186],['r',164,185],['w',160,167],['r',161,165],['w',170,176],['w',180,190],['w',186,198],['w',188,199],['w',187,196],['r',186,188],['r',184,187]];
[124,125,126,127,128].forEach(i=>el(B,'rect',{x:cx(i)-3,y:665,width:8,height:20,fill:'#ff0a0a','shape-rendering':'crispEdges'}));
indc.forEach((c,i)=>{const y1=Yz(c[1]),y2=Yz(c[2]),x=cx(i),h=y2-y1;const col=c[0]==='w'?'#fff':(c[0]==='r'?'#d80000':CYD);
  if(h<3)el(B,'rect',{x:x-3,y:Math.round(y1),width:7,height:2,fill:col,'shape-rendering':'crispEdges'});
  else el(B,'rect',{x:x-2.5,y:crisp(y1),width:6,height:Math.round(h),fill:'#000',stroke:col,'shape-rendering':'crispEdges'});});
[5,7,71,78].forEach(i=>el(B,'rect',{x:cx(i)-4,y:763,width:7,height:34,fill:'#ffff00','shape-rendering':'crispEdges'}));
const ya=[[52,352],[110,367],[170,390],[250,420],[310,435],[360,445],[430,435],[490,430],[600,435],[700,437],[760,438],[830,425],[930,403],[1010,370],[1090,330],[1130,320],[1190,320],[1250,340],[1340,385],[1430,408],[1500,430],[1568,442]];
const yb=[[0,435],[50,445],[100,442],[150,425],[210,380],[300,305],[370,258],[415,243],[470,250],[530,275],[560,283],[640,283],[700,268],[750,250],[790,225],[830,212],[920,211]];
poly(B,ya.map(z7).concat(yb.map(z8)),'#f0f060');
vl(B,903.5,790,801,'#888');
lab(B,1259,680,'跑','#ffff40',15);lab(B,1242,702,'卖','#ffff40',15);lab(B,1208,719,'目标','#ffff40',15);

/* macd pane */
hl(C,103,1617,801.5,RED);vl(C,103.5,801,939,RED);hl(C,103,1633,938.5,RED);
hl(C,104,1617,832.5,GRID,'3 3');hl(C,104,1617,871.5,GRID,'3 3');hl(C,104,1617,910.5,GRID,'3 3');
[['5.00',836],['0.00',875],['-5.00',915]].forEach(a=>lab(C,100,a[1],a[0],'#a0a0a0',14.5,'end'));
const hist=[790,800,800,797,797,797,795,795,775,770,768,768,768,763,760,737,712,703,690,675,655,642,638,646,660,676,692,707,713,720,722,733,725,722,713,720,735,752,752,738,722,702,700,710,685,682,697,703,687,686,673,658,643,644,651,668,677,677,693,712,722,733,735,737,745,740,760,780,808,825,832,835,820,803,777,757,748,745,745,738,725,722,708,710,720,722,712,702,686,655,630,605,582,585,585,605,623,658,698,670,680,690,695,702,720,733,745,768,792,788,783,770,765,760,748,730,722,722,718,715,715,705,685,680,668,665,653,660,665,695,712,733,736,735,732,722,722];
hist.forEach((v,i)=>{const pos=v<723;const col=pos?(i%2?'#e02828':'#8c8c8c'):(i%3===2?'#8c8c8c':'#20c8c8');vl(C,cx(i)+.5,871,Yz(v),col);});
const w7=[[52,823],[90,848],[140,868],[175,888],[215,886],[260,900],[298,910],[350,880],[390,850],[430,807],[460,798],[495,799],[530,808],[570,815],[600,822],[640,812],[680,818],[715,838],[750,830],[790,815],[820,790],[880,790],[900,775],[930,770],[980,725],[1000,713],[1040,712],[1060,706],[1090,720],[1130,730],[1180,745],[1215,760],[1250,810],[1300,860],[1340,865],[1380,852],[1430,855],[1500,832],[1568,835]];
const y7=[[52,790],[120,825],[175,855],[240,875],[298,892],[350,888],[400,865],[450,835],[500,820],[570,817],[650,812],[740,828],[810,820],[910,795],[1000,750],[1075,723],[1140,732],[1220,750],[1300,805],[1350,830],[1430,848],[1500,840],[1568,838]];
const w8=[[0,838],[40,832],[80,800],[120,750],[160,690],[190,668],[225,667],[280,660],[340,660],[390,680],[430,725],[470,740],[515,745],[560,727],[620,720],[650,710],[700,670],[745,645],[780,640],[820,657],[870,672],[920,668]];
const y8=[[0,840],[50,835],[110,805],[170,750],[220,710],[290,682],[360,672],[420,690],[480,715],[530,727],[640,720],[700,700],[770,665],[800,660],[850,665],[920,668]];
[[w7,w8,'#ffffff'],[y7,y8,'#f0f060']].forEach(s=>poly(C,s[0].map(z7).concat(s[1].map(z8)),s[2]));
vl(C,903.5,925,939,'#888');

/* side panel */
function rows(id,list){document.getElementById(id).innerHTML=list.map(r=>`<div class="pvrow"><span class="pv-l${r[3]?' ind':''}">${r[0]}</span><span class="pv-m">${r[1]}</span><span class="pv-r ${r[4]||''}">${r[2]}</span></div>`).join('');}
rows('s1',[['最新指数','','3416.72'],['指数涨跌','','20.25'],['涨跌幅度','','0.60%'],['昨日收盘','','3396.47',0,'wt'],['今日开盘','','3397.02'],['今日最高','','3420.03'],['今日最低','','3392.98',0,'gn'],['总成交量','','2.3亿'],['总成交额','','2690.1亿']]);
rows('s2',[['上涨家数','','1197',0,'wt'],['平盘家数','','79',0,'wt'],['下跌家数','','363',0,'wt']]);
rows('s3',[['沪深均价','19.29','1.23%']]);
rows('s4',[['A股指数','3581.25','0.60%',1],['B 股指数','245.97','0.48%',1],['工业指数','3022.05','0.88%'],['商业指数','3111.90','0.76%'],['地产指数','6392.99','0.29%'],['公用指数','4399.57','0.36%'],['综合指数','2966.94','0.10%'],['上证180','10281.09','0.46%'],['基金指数','7165.78','0.61%'],['国债指数','185.78','0.01%'],['企债指数','252.55','0.01%'],['红利指数','2754.22','0.46%'],['上证50','3469.17','0.22%'],['新综指','2887.69','0.60%']]);

/* right menus */
const mr=document.getElementById('menuRight');
[['板块',43],['账户',15],['资讯',15],['个性化',15],['系统工具',15],['帮助',17]].forEach(m=>{const s=document.createElement('span');s.textContent=m[0];mr.appendChild(s);s.style.marginLeft=m[1]+'px';});
mr.style.marginRight='25px';

/* tabs */
const th=document.getElementById('tabsHost');
document.querySelector('.tx-47').style.left='47px';
[['美黄金',121],['美原油',180],['M-Nas',239],['M-DAX',301],['恒指',368],['镍',413],['铁矿',441],['螺纹',485],['+',530]].forEach(t=>{const a=document.createElement('a');a.className='nav-link';a.textContent=t[0];a.style.left=t[1]+'px';if(t[0]==='+'){a.style.fontSize='22px';a.style.fontWeight='700';a.style.top='3px';a.style.color='#999';}th.appendChild(a);});

/* stock bar */
const sb=document.getElementById('stockBar');
[['st-r','上证指数',127],['st-rb','3416.72',198],['st-rb','+20.25',270],['st-w','文华商品',356],['st-wb','0.00',428],['st-wb','0.00',472],['st-r','CRB指数',549],['st-rb','189.83',622],['st-rb','+1.69',685],['st-or','投教小科普：开户时如何自我保护',1150],['clockt','20:53:35-Local',1799]].forEach(t=>{const s=document.createElement('span');s.className=t[0];s.textContent=t[1];s.style.left=t[2]+'px';sb.appendChild(s);});
sb.insertAdjacentHTML('beforeend',`<svg class="position-absolute" style="left:0;top:0" width="1920" height="36"><rect x="1725" y="8" width="1" height="18" fill="#e02020"/><rect x="1741" y="8" width="22" height="20" fill="#0a5a2a"/><rect x="1741" y="22" width="22" height="6" fill="#10f040"/><rect x="1741" y="8" width="22" height="20" fill="none" stroke="#ccc"/><rect x="1771" y="21" width="3" height="6" fill="#20a030"/><rect x="1776" y="17" width="3" height="10" fill="#20a030"/><rect x="1781" y="12" width="3" height="15" fill="#20a030"/><rect x="1786" y="7" width="3" height="20" fill="#20a030"/></svg>`);

/* taskbar */
const tb=document.getElementById('taskBar');
const ics=[
[-1,`<svg width="21" height="21" fill="#fff"><path d="M0 3l9-1.500V10H0zM10 1.300L21 0v10H10zM0 11h9v8.500L0 18zM10 11h11v10l-11-1.500z"/></svg>`],
[59,`<svg width="22" height="22" fill="none" stroke="#fff" stroke-width="3"><circle cx="11" cy="11" r="8.500"/></svg>`],
[120,`<svg width="26" height="24" fill="none" stroke="#fff"><rect x="6.500" y="1.500" width="13" height="21"/><path d="M3.500 4.500H1.500v15h2M22.500 4.500h2v15h-2"/></svg>`],
[184,`<svg width="30" height="36"><rect width="30" height="36" rx="7" fill="#28a878"/><path d="M15 5l9 6-9 6-9-6zM6 16l9 6 9-6M6 21l9 6 9-6" fill="none" stroke="#fff" stroke-width="2"/></svg>`],
[245,`<svg width="30" height="32"><circle cx="15" cy="16" r="15" fill="#e23a30"/><path d="M15 16L28 23A15 15 0 0 1 8 29z" fill="#2ea84a"/><path d="M15 16L8 29A15 15 0 0 1 2 8z" fill="#2ea84a"/><path d="M15 16L28 9a15 15 0 0 1 0 14z" fill="#f6c020"/><circle cx="15" cy="16" r="7.500" fill="#4a8cf0" stroke="#fff" stroke-width="2"/></svg>`],
[308,`<svg width="30" height="34" fill="none"><circle cx="15" cy="17" r="14" fill="#f4f8ee" stroke="#48b030" stroke-width="3"/><path d="M8 17h14a7 7 0 1 0-2 5" stroke="#48b030" stroke-width="4"/><path d="M20 3c5-3 9-3 9 0" stroke="#48b030" stroke-width="2"/></svg>`],
[371,`<svg width="30" height="36" fill="none"><circle cx="15" cy="17" r="12" stroke="#1890f0" stroke-width="6"/><path d="M4 32c2-6 6-6 8-4 2-7 11-6 12-1 4-1 6 1 5 5z" fill="#fff"/></svg>`],
[432,`<svg width="32" height="34"><ellipse cx="12" cy="13" rx="12" ry="11" fill="#38c838"/><ellipse cx="22" cy="22" rx="10" ry="9" fill="#e8e8e8"/><circle cx="8" cy="11" r="1.600" fill="#124"/><circle cx="16" cy="11" r="1.600" fill="#124"/><circle cx="19" cy="20" r="1.300" fill="#555"/><circle cx="26" cy="20" r="1.300" fill="#555"/></svg>`],
[493,`<span style="color:#e83020;font-weight:900;font-size:30px;line-height:30px;font-family:'Liberation Sans'">W</span>`],
[556,`<svg width="32" height="38"><rect width="16" height="38" fill="#b01020"/><rect x="16" width="16" height="38" fill="#123080"/><text x="1" y="27" font-size="13" font-weight="700" fill="#fff">wh</text><text x="18" y="26" font-size="22" fill="#fff">6</text></svg>`],
[618,`<svg width="30" height="36"><rect width="30" height="36" rx="5" fill="#2050d8"/><circle cx="15" cy="18" r="11" fill="none" stroke="#fff" stroke-width="2.500"/><path d="M8 12c6-4 13 1 8 6s1 7 6 6" fill="none" stroke="#f0d040" stroke-width="3"/></svg>`],
[680,`<svg width="26" height="36"><rect width="26" height="36" y="0" fill="#d8e4f0"/><rect x="4" y="8" width="9" height="18" fill="#e89030"/><path d="M15 10h8M15 14h8M15 18h8M15 22h8" stroke="#7aa0c8"/></svg>`]];
ics.forEach((c,n)=>{const d=document.createElement('div');d.className='tkic'+(n===7?' act-a':n===9?' act-b':'');d.style.left=c[0]+'px';d.innerHTML=c[1];tb.insertBefore(d,tb.firstChild);});
[[189,51,0],[432,61,1],[499,51,0],[556,61,0],[623,51,0],[685,51,0]].forEach(m=>{const d=document.createElement('div');d.className='tkmark'+(m[2]?' or':'');d.style.left=m[0]+'px';d.style.width=m[1]+'px';tb.appendChild(d);});
const tr=[
[1553,`<svg width="16" height="10" fill="none" stroke="#ddd"><path d="M1 9l7-7 7 7"/></svg>`],
[1582,`<svg width="18" height="20" fill="#888"><rect x="1" y="3" width="11" height="13"/><path d="M12 7l5-3v11l-5-3z"/><circle cx="6" cy="9" r="2.500" fill="#222"/></svg>`],
[1613,`<svg width="18" height="18" fill="none" stroke="#999"><path d="M2 17a15 15 0 0 1 15-15M6 17A11 11 0 0 1 17 6M10 17a7 7 0 0 1 7-7M14 17a3 3 0 0 1 3-3"/></svg>`],
[1643,`<svg width="20" height="14"><rect x="0" y="3" width="4" height="8" fill="#ddd"/><rect x="3.500" y=".500" width="16" height="13" fill="none" stroke="#ddd"/><rect x="5" y="2" width="13" height="10" fill="#ddd"/></svg>`],
[1670,`<svg width="20" height="18" fill="none" stroke="#ccc"><path d="M2 6h4l5-4v14l-5-4H2zM14 5c2 2 2 6 0 8M17 3c3 3 3 9 0 12"/></svg>`]];
tr.forEach(t=>{const d=document.createElement('div');d.className='tray';d.style.left=(t[0]-12)+'px';d.style.width='24px';d.innerHTML=t[1];tb.appendChild(d);});
tb.insertAdjacentHTML('beforeend',`<div class="tray" style="left:1690px;width:24px;font-size:19px">英</div><div class="tray" style="left:1727px;width:22px"><span class="mbox">M</span></div><div class="tray" style="left:1869px;width:24px"><svg width="20" height="24" fill="none" stroke="#eee"><path d="M1.500 3.500h17v15h-5l-3.500 3-3.500-3h-5z"/></svg></div>`);

/* free-hand annotations */
const N=document.getElementById('anno');
function seg(a,b,col,w,head){el(N,'line',{x1:a[0],y1:a[1],x2:b[0],y2:b[1],stroke:col,'stroke-width':w,'stroke-linecap':'round'});
  if(head){const t=Math.atan2(a[1]-b[1],a[0]-b[0]);[.42,-.42].forEach(d=>{el(N,'line',{x1:b[0],y1:b[1],x2:b[0]+Math.cos(t+d)*head,y2:b[1]+Math.sin(t+d)*head,stroke:col,'stroke-width':w,'stroke-linecap':'round'});});}}
el(N,'ellipse',{cx:907,cy:478,rx:29,ry:27,fill:'none',stroke:'#f0f0f0'});
el(N,'circle',{cx:936,cy:505,r:3,fill:'none',stroke:'#f0f0f0'});
seg([868,615],[1243,306],'#28ee10',6.5,24);
const R='#ff0808';
seg([860,638],[958,358],R,6,26);
seg([958,358],[1088,573],R,6,26);
seg([1088,573],[1240,310],R,6,26);
seg([1251,333],[1411,502],R,6,26);
seg([1411,502],[1536,398],R,6,26);
seg([1536,398],[1708,752],R,6,26);
el(N,'ellipse',{cx:1157,cy:474,rx:35,ry:40,fill:'none',stroke:R,'stroke-width':6});
el(N,'polyline',{points:'1215,251 1237,266 1207,271',fill:'none',stroke:R,'stroke-width':5.5,'stroke-linecap':'round','stroke-linejoin':'round'});
el(N,'path',{d:'M955 525v17l4-4 3 7 3-1-3-7h5z',fill:'#fff',stroke:'#222','stroke-width':.7});
el(N,'polyline',{points:'36,565 36,845 0,885',fill:'none',stroke:'#333'});
</script>
</body>
</html>
